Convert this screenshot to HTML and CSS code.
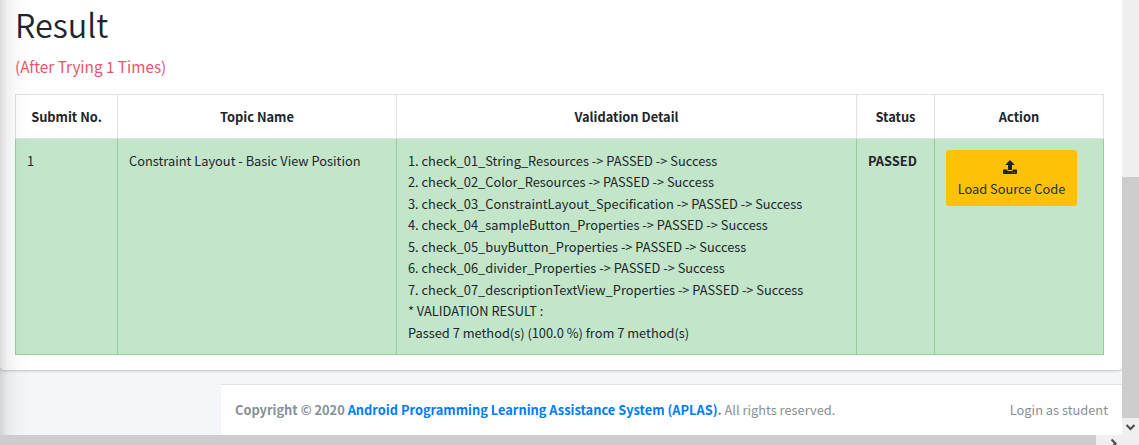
FILE: index.html
```
<!DOCTYPE html>
<html lang="en">
<head>
<meta charset="utf-8">
<title>Result</title>
<link rel="stylesheet" href="styles.css">
</head>
<body>
<div class="frame">
  <div class="viewport">
    <section class="card">
      <h1 class="title">Result</h1>
      <p class="attempts">(After Trying 1 Times)</p>
      <table class="results">
        <colgroup><col class="c-no"><col class="c-topic"><col class="c-detail"><col class="c-status"><col class="c-action"></colgroup>
        <thead>
          <tr><th>Submit No.</th><th>Topic Name</th><th>Validation Detail</th><th>Status</th><th>Action</th></tr>
        </thead>
        <tbody>
          <tr>
            <td>1</td>
            <td>Constraint Layout - Basic View Position</td>
            <td>1. check_01_String_Resources -&gt; PASSED -&gt; Success<br>2. check_02_Color_Resources -&gt; PASSED -&gt; Success<br>3. check_03_ConstraintLayout_Specification -&gt; PASSED -&gt; Success<br>4. check_04_sampleButton_Properties -&gt; PASSED -&gt; Success<br>5. check_05_buyButton_Properties -&gt; PASSED -&gt; Success<br>6. check_06_divider_Properties -&gt; PASSED -&gt; Success<br>7. check_07_descriptionTextView_Properties -&gt; PASSED -&gt; Success<br>* VALIDATION RESULT :<br>Passed 7 method(s) (100.0 %) from 7 method(s)</td>
            <td><b>PASSED</b></td>
            <td>
              <button class="load" type="button">
                <svg class="upload" viewBox="0 0 14 14" aria-hidden="true"><path d="M7 0 11.8 5H9V10H5V5H2.2Z"/><path d="M.7 9.4H4.3V10.2Q4.3 10.9 5 10.9H9Q9.7 10.9 9.7 10.2V9.4H13.3Q14 9.4 14 10.1V13.3Q14 14 13.3 14H.7Q0 14 0 13.3V10.1Q0 9.4 .7 9.4Z"/><path class="led" d="M9.4 12.2h.8v.8h-.8zM11.5 12.2h.8v.8h-.8z"/></svg>
                <span>Load Source Code</span>
              </button>
            </td>
          </tr>
        </tbody>
      </table>
    </section>
    <footer class="footer">
      <div><strong>Copyright © 2020 <a class="link" href="#">Android Programming Learning Assistance System (APLAS)</a>.</strong> All rights reserved.</div>
      <div>Login as student</div>
    </footer>
    <div class="edge-shadow"></div>
  </div>
  <div class="vbar">
    <div class="vthumb"></div>
    <svg class="down" viewBox="0 0 17 17"><path d="M4.5 7 8.5 11 12.5 7"/></svg>
  </div>
  <div class="hbar">
    <div class="hthumb"></div>
    <svg class="right" viewBox="0 0 17 10"><path d="M6.5 4.5 10.5 8.5 6.5 12.5"/></svg>
  </div>
</div>
</body>
</html>
```
FILE: styles.css
```
* { box-sizing: border-box; }
body {
  margin: 0;
  overflow: hidden;
  font-family: "Noto Sans CJK SC", "Open Sans", sans-serif;
  font-size: 12.84px;
  line-height: 21.5px;
  color: #212529;
}
.frame {
  display: grid;
  grid-template: 435px 10px / 1122px 17px;
  width: 1139px;
  height: 445px;
}
.viewport {
  position: relative;
  display: flex;
  flex-direction: column;
  background: #f4f6f9;
  overflow: hidden;
}
.card {
  height: 370px;
  padding: 2px 18px 0 15px;
  background: #fff;
  border-radius: 0 0 4px 4px;
  box-shadow: 0 0 1px rgba(0,0,0,.13), 0 1px 3px rgba(0,0,0,.2);
}
.title {
  margin: 0;
  font-size: 32.4px;
  line-height: 43px;
  font-weight: 350;
}
.attempts {
  margin: 9px 0 16px;
  font-size: 15.3px;
  line-height: 24px;
  color: #e8556c;
}
.results {
  width: 1089px;
  table-layout: fixed;
  border-collapse: collapse;
}
.c-no { width: 102px; }
.c-topic { width: 279px; }
.c-detail { width: 460px; }
.c-status { width: 78px; }
.c-action { width: 169px; }
th {
  height: 44px;
  padding: 0;
  border: 1px solid #dee2e6;
  font-weight: 700;
}
td {
  height: 216px;
  padding: 10.8px 11px 10px;
  border: 1px solid #8fd19e;
  background: #c3e6cb;
  vertical-align: top;
  white-space: nowrap;
}
.load {
  display: flex;
  flex-direction: column;
  align-items: center;
  width: 131px;
  height: 56px;
  padding: 10px 0 0;
  border: 0;
  border-radius: 3px;
  background: #ffc107;
  color: #1f2d3d;
  font: inherit;
}
.upload {
  width: 14px;
  height: 14px;
  margin: 0 4px 4px 0;
  fill: #212529;
}
.led { fill: #ffc107; }
.footer {
  display: flex;
  justify-content: space-between;
  height: 51px;
  margin: 14px 0 0 221px;
  padding: 14px 14px 0;
  border-top: 1px solid #dee2e6;
  background: #fff;
  color: #869099;
  font-size: 12.83px;
}
.link { color: #007bff; text-decoration: none; }
.edge-shadow {
  position: absolute;
  inset: 0 auto 0 0;
  width: 30px;
  background: linear-gradient(90deg, rgba(0,0,0,.14), rgba(0,0,0,.055) 25%, rgba(0,0,0,.014) 60%, transparent);
}
.vbar {
  display: flex;
  flex-direction: column;
  padding-top: 177px;
  background: #f0f0f0;
}
.vthumb { height: 241px; background: #cdcdcd; }
.down { width: 17px; height: 17px; }
.down path, .right path {
  fill: none;
  stroke: #505050;
  stroke-width: 2.2;
}
.hbar {
  grid-column: 1 / 3;
  display: flex;
  background: #f0f0f0;
}
.hthumb { width: 1096px; background: #cdcdcd; }
.right { width: 17px; height: 10px; margin-left: 9px; }
```
